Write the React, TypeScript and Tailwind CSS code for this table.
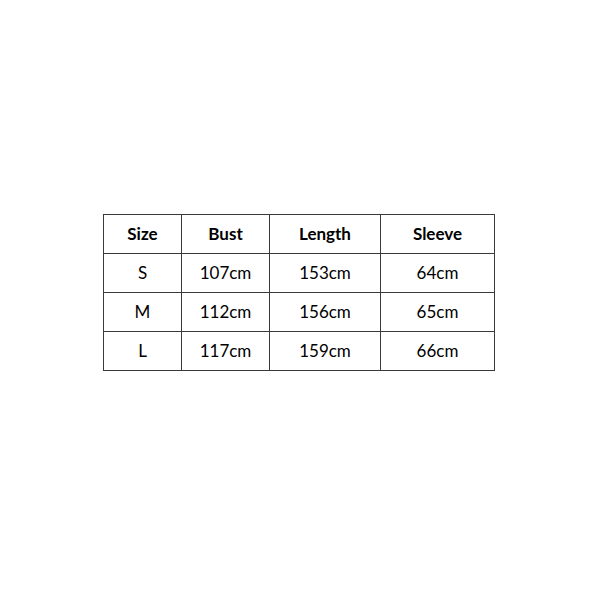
const headers = ["Size", "Bust", "Length", "Sleeve"];

const rows = [
  ["S", "107cm", "153cm", "64cm"],
  ["M", "112cm", "156cm", "65cm"],
  ["L", "117cm", "159cm", "66cm"],
];

const colWidths = ["w-[78px]", "w-[88px]", "w-[111px]", "w-[114px]"];

export default function App() {
  return (
    <div className="h-[600px] w-[600px] bg-white pl-[103px] pt-[214px] font-['Lato',sans-serif] text-[17px] text-black">
      <table className="w-[391px] table-fixed border-collapse">
        <thead>
          <tr className="h-[39px]">
            {headers.map((h, i) => (
              <th key={h} className={`${colWidths[i]} border border-[#3a3a3a] p-0 text-center font-bold`}>
                {h}
              </th>
            ))}
          </tr>
        </thead>
        <tbody>
          {rows.map((row) => (
            <tr key={row[0]} className="h-[39px]">
              {row.map((cell, i) => (
                <td key={i} className="border border-[#3a3a3a] p-0 text-center font-normal">
                  {cell}
                </td>
              ))}
            </tr>
          ))}
        </tbody>
      </table>
    </div>
  );
}
